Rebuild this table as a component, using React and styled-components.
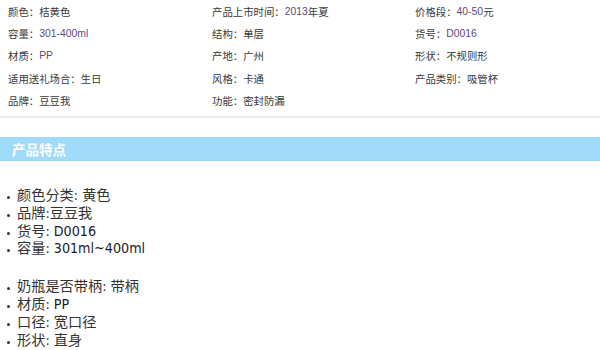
import React from "react";
import styled, { createGlobalStyle } from "styled-components";

const GlobalStyle = createGlobalStyle`
  html, body {
    margin: 0;
    padding: 0;
    background: #fff;
  }
  body {
    width: 600px;
    height: 350px;
    overflow: hidden;
    font-family: "Liberation Sans", "Noto Sans CJK SC", sans-serif;
  }
`;

const attributes = [
  { label: "颜色", value: "桔黄色" },
  { label: "产品上市时间", value: "2013", suffix: "年夏" },
  { label: "价格段", value: "40-50", suffix: "元" },
  { label: "容量", value: "301-400ml" },
  { label: "结构", value: "单层" },
  { label: "货号", value: "D0016" },
  { label: "材质", value: "PP" },
  { label: "产地", value: "广州" },
  { label: "形状", value: "不规则形" },
  { label: "适用送礼场合", value: "生日" },
  { label: "风格", value: "卡通" },
  { label: "产品类别", value: "吸管杯" },
  { label: "品牌", value: "豆豆我" },
  { label: "功能", value: "密封防漏" },
];

const features = [
  [
    { label: "颜色分类", value: "黄色" },
    { label: "品牌", value: "豆豆我", tight: true },
    { label: "货号", value: "D0016", latin: true },
    { label: "容量", value: "301ml~400ml", latin: true },
  ],
  [
    { label: "奶瓶是否带柄", value: "带柄" },
    { label: "材质", value: "PP", latin: true },
    { label: "口径", value: "宽口径" },
    { label: "形状", value: "直身" },
  ],
];

const isLatin = (s) => /^[\x00-\x7f]+$/.test(s);

export default function App() {
  return (
    <>
      <GlobalStyle />
      <Page>
        <AttrGrid>
          {attributes.map((a) => (
            <AttrItem key={a.label}>
              {a.label}：
              <AttrValue $latin={isLatin(a.value)}>{a.value}</AttrValue>
              {a.suffix}
            </AttrItem>
          ))}
        </AttrGrid>

        <SectionBar>
          <SectionTitle>产品特点</SectionTitle>
        </SectionBar>

        {features.map((group, i) => (
          <FeatureList key={i}>
            {group.map((f) => (
              <FeatureItem key={f.label}>
                {f.label}:{f.tight ? "" : " "}
                <FeatureValue $latin={f.latin}>{f.value}</FeatureValue>
              </FeatureItem>
            ))}
          </FeatureList>
        ))}
      </Page>
    </>
  );
}

const Page = styled.div`
  width: 600px;
`;

const AttrGrid = styled.ul`
  list-style: none;
  margin: 0;
  padding: 0 0 4px 8px;
  display: grid;
  grid-template-columns: 204px 203px 1fr;
  grid-auto-rows: 22.4px;
  border-bottom: 2px solid #ececec;
`;

const AttrItem = styled.li`
  display: flex;
  align-items: center;
  font-size: 10.4px;
  color: #383838;
  white-space: nowrap;
`;

const AttrValue = styled.span`
  color: ${(p) => (p.$latin ? "#5f4a7c" : "#383838")};
`;

const SectionBar = styled.div`
  margin-top: 19px;
  height: 24px;
  background: #a1dbfb;
  display: flex;
  align-items: center;
  padding-left: 12px;
`;

const SectionTitle = styled.h3`
  margin: 0;
  font-family: "Noto Sans CJK SC", sans-serif;
  font-size: 13.5px;
  font-weight: 700;
  color: #fff;
`;

const FeatureList = styled.ul`
  list-style: none;
  margin: 26px 0 0;
  padding: 0 0 0 17px;

  & + & {
    margin-top: 20px;
  }
`;

const FeatureItem = styled.li`
  position: relative;
  font-family: "DejaVu Sans Condensed", "Liberation Sans", "Noto Sans CJK SC", sans-serif;
  font-size: 14.2px;
  line-height: 17.8px;
  color: #333;
  white-space: nowrap;

  &::before {
    content: "";
    position: absolute;
    left: -10px;
    top: 9px;
    width: 3px;
    height: 3px;
    border-radius: 50%;
    background: #333;
  }
`;

const FeatureValue = styled.span`
  color: ${(p) => (p.$latin ? "#1c1c2c" : "#333")};
`;
